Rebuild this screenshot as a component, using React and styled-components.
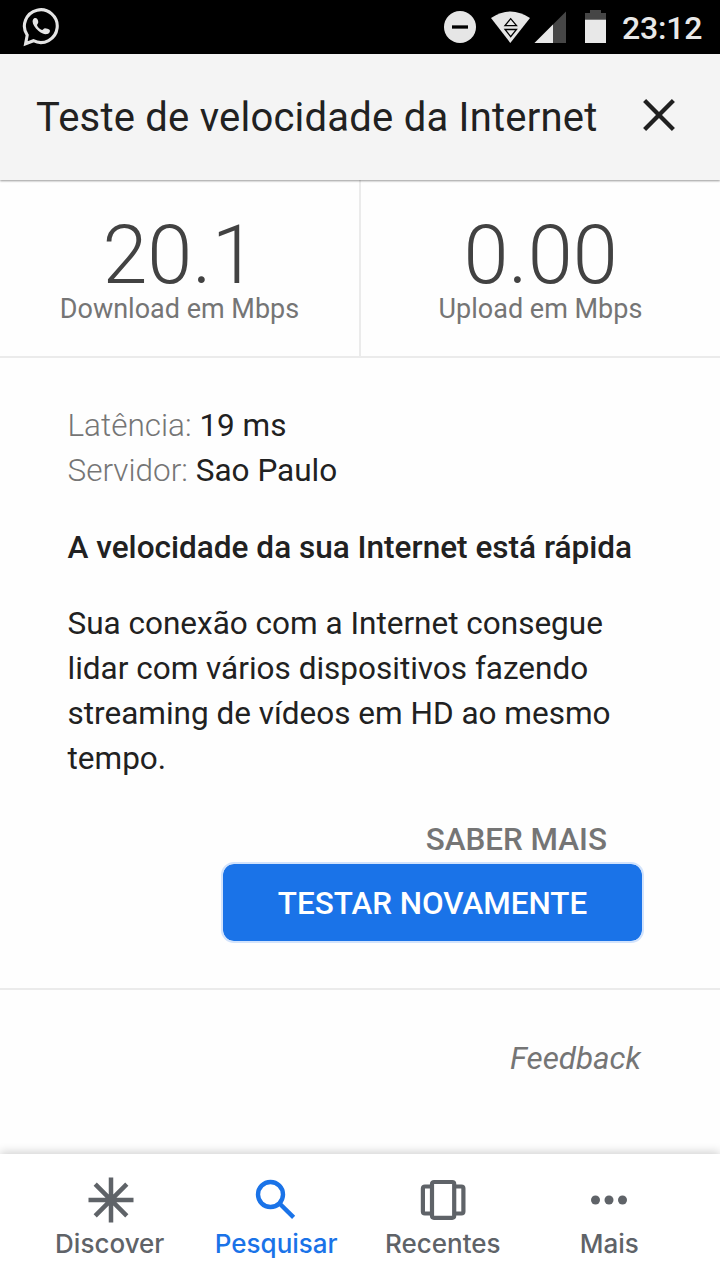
import styled, { createGlobalStyle } from "styled-components";

const metrics = [
  { value: "20.1", label: "Download em Mbps" },
  { value: "0.00", label: "Upload em Mbps" },
];

function WhatsAppIcon() {
  return (
    <svg width="38" height="40" viewBox="22 7 38 40">
      <path
        d="M25.6 43.7L27.2 35.2A16.4 16.4 0 1 1 33.4 40.7Z"
        fill="none"
        stroke="#e4e4e4"
        strokeWidth="3.1"
      />
      <path
        d="M33.2 19.3c.8-1.5 3-1.6 3.9-.5.9 1.2 1.3 2.8 1.1 4-.3 1-1.3 1.6-1.1 2.6.9 2.1 2.800 3.800 4.900 4.500 1.200-.1 1.800-1.600 3-1.700 1.500.1 3.500.7 4.800 1.700.6 1.500-.6 3.500-2.500 4.100-2.600.6-6-.7-9-3.300-3.300-3-5.700-6.500-5.700-9.300 0-.8.2-1.500.6-2.100z"
        fill="#e4e4e4"
      />
    </svg>
  );
}

function StatusIcons() {
  return (
    <svg width="166" height="38" viewBox="442 8 166 38">
      <circle cx="460" cy="27" r="16" fill="#e6e6e6" />
      <path d="M452 27h16" stroke="#000" strokeWidth="3.3" />
      <path d="M491 18Q510.5 5 530 18L510.3 43Z" fill="#e6e6e6" />
      <path
        d="M510.7 18.7L505 25.6H516.5ZM505 29.5H516.5L510.7 36.7Z"
        fill="none"
        stroke="#000"
        strokeWidth="1.3"
      />
      <path d="M534.5 43L566 11.5V43Z" fill="#464646" />
      <path d="M534.5 43L553 24.5V43Z" fill="#e8e8e8" />
      <path d="M585 13h5v-3h11v3h5v7h-21z" fill="#464646" />
      <path d="M585 19.7h21V43h-21z" fill="#e8e8e8" />
    </svg>
  );
}

function CloseIcon() {
  return (
    <svg width="34" height="34" viewBox="0 0 34 34">
      <path d="M2.6 2.6L31.4 31.4M31.4 2.6L2.6 31.4" stroke="#202020" strokeWidth="4.3" />
    </svg>
  );
}

function DiscoverIcon() {
  return (
    <svg width="48" height="48" viewBox="0 0 48 48">
      <path
        d="M25 1.5v45M2.5 24h45M9.2 8.2l31.6 31.6M40.8 8.2L9.2 39.8"
        stroke="#5f6368"
        strokeWidth="4.5"
      />
    </svg>
  );
}

function SearchIcon() {
  return (
    <svg width="48" height="48" viewBox="0 0 48 48">
      <g fill="none" stroke="#1a73e8" strokeWidth="4.4">
        <circle cx="18.5" cy="18.5" r="12.5" />
        <path d="M27.3 27.3L41.6 41.4" />
      </g>
    </svg>
  );
}

function RecentsIcon() {
  return (
    <svg width="48" height="48" viewBox="0 0 48 48">
      <g fill="none" stroke="#5f6368" strokeWidth="4.2">
        <rect x="13" y="6" width="22.2" height="35.8" rx="2" />
        <path d="M13 10.5H5.9Q3.9 10.5 3.9 12.5V35.5Q3.9 37.5 5.9 37.5H13" />
        <path d="M35.2 10.5H42.4Q44.4 10.5 44.4 12.5V35.5Q44.4 37.5 42.4 37.5H35.2" />
      </g>
    </svg>
  );
}

function MoreIcon() {
  return (
    <svg width="48" height="48" viewBox="0 0 48 48" fill="#5f6368">
      <circle cx="10.500" cy="24" r="4.5" />
      <circle cx="24" cy="24" r="4.5" />
      <circle cx="37.500" cy="24" r="4.5" />
    </svg>
  );
}

const tabs = [
  { label: "Discover", icon: <DiscoverIcon /> },
  { label: "Pesquisar", icon: <SearchIcon />, active: true },
  { label: "Recentes", icon: <RecentsIcon /> },
  { label: "Mais", icon: <MoreIcon /> },
];

function App() {
  return (
    <Screen>
      <GlobalStyle />
      <StatusBar>
        <WhatsAppIcon />
        <StatusRight>
          <StatusIcons />
          <Clock>23:12</Clock>
        </StatusRight>
      </StatusBar>
      <Header>
        <Title>Teste de velocidade da Internet</Title>
        <CloseButton aria-label="Fechar">
          <CloseIcon />
        </CloseButton>
      </Header>
      <Metrics>
        {metrics.map((metric) => (
          <Metric key={metric.label}>
            <MetricValue>{metric.value}</MetricValue>
            <MetricLabel>{metric.label}</MetricLabel>
          </Metric>
        ))}
      </Metrics>
      <Details>
        <Info>
          <InfoLabel>Latência:</InfoLabel> 19 ms
        </Info>
        <Info>
          <InfoLabel>Servidor:</InfoLabel> Sao Paulo
        </Info>
        <Verdict>A velocidade da sua Internet está rápida</Verdict>
        <Description>
          Sua conexão com a Internet consegue lidar com vários dispositivos
          fazendo streaming de vídeos em HD ao mesmo tempo.
        </Description>
        <Actions>
          <LearnMore>SABER MAIS</LearnMore>
          <RetryButton>TESTAR NOVAMENTE</RetryButton>
        </Actions>
      </Details>
      <Footer>
        <Feedback>Feedback</Feedback>
      </Footer>
      <NavBar>
        {tabs.map((tab) => (
          <Tab key={tab.label} $active={tab.active}>
            {tab.icon}
            <TabLabel>{tab.label}</TabLabel>
          </Tab>
        ))}
      </NavBar>
    </Screen>
  );
}

const GlobalStyle = createGlobalStyle`
  * {
    box-sizing: border-box;
  }

  body {
    margin: 0;
    background: #fff;
    font-family: Roboto, sans-serif;
  }

  h1, h2, p {
    margin: 0;
  }

  button {
    border: none;
    padding: 0;
    background: none;
    font-family: inherit;
  }

  svg {
    display: block;
  }
`;

const Screen = styled.div`
  display: flex;
  flex-direction: column;
  width: 720px;
  height: 1280px;
  overflow: hidden;
  background: #fefefe;
  color: #212121;
`;

const StatusBar = styled.div`
  display: flex;
  justify-content: space-between;
  align-items: center;
  flex-shrink: 0;
  height: 54px;
  padding: 0 18px 0 22px;
  background: #000;
`;

const StatusRight = styled.div`
  display: flex;
  align-items: center;
  gap: 14px;
`;

const Clock = styled.span`
  width: 80px;
  padding-top: 2px;
  font-size: 32px;
  font-weight: 500;
  line-height: 52px;
  letter-spacing: -0.2px;
  white-space: nowrap;
  color: #e8e8e8;
`;

const Header = styled.header`
  display: flex;
  justify-content: space-between;
  align-items: center;
  flex-shrink: 0;
  height: 126px;
  padding: 0 44px 0 36px;
  background: #f4f4f4;
  box-shadow: 0 1px 2px rgba(0, 0, 0, 0.4);
  z-index: 1;
`;

const Title = styled.h1`
  padding-top: 2px;
  font-size: 40px;
  font-weight: 400;
  line-height: 124px;
  white-space: nowrap;
  letter-spacing: 0.22px;
`;

const CloseButton = styled.button`
  margin-bottom: 4px;
`;

const Metrics = styled.section`
  display: grid;
  grid-template-columns: 361px 1fr;
  flex-shrink: 0;
  height: 178px;
  border-bottom: 2px solid #ebebeb;
`;

const Metric = styled.div`
  display: flex;
  flex-direction: column;
  align-items: center;
  padding-top: 39px;

  &:first-child {
    border-right: 2px solid #ebebeb;
  }
`;

const MetricValue = styled.div`
  height: 73px;
  font-size: 81px;
  font-weight: 300;
  line-height: 73px;
  color: #424242;
`;

const MetricLabel = styled.div`
  font-size: 27px;
  line-height: 34px;
  white-space: nowrap;
  color: #757575;
`;

const Details = styled.main`
  flex-shrink: 0;
  height: 632px;
  padding: 45px 78px 0 67.5px;
  border-bottom: 2px solid #ebebeb;
`;

const Info = styled.p`
  font-size: 31.5px;
  line-height: 45px;
`;

const InfoLabel = styled.span`
  font-weight: 300;
  color: #757575;
`;

const Verdict = styled.h2`
  margin-top: 32px;
  font-size: 31.55px;
  font-weight: 500;
  line-height: 45px;
  white-space: nowrap;
`;

const Description = styled.p`
  margin-top: 31px;
  font-size: 31.5px;
  line-height: 45px;
`;

const Actions = styled.div`
  display: flex;
  flex-direction: column;
  align-items: flex-end;
`;

const LearnMore = styled.button`
  margin: 36px 35px 0 0;
  font-size: 31.4px;
  font-weight: 500;
  line-height: 45px;
  white-space: nowrap;
  color: #757575;
`;

const RetryButton = styled.button`
  width: 423px;
  height: 81px;
  margin-right: -2px;
  padding-top: 1px;
  border: 2px solid #d2e3fc;
  border-radius: 13px;
  background: #1a73e8;
  background-clip: padding-box;
  font-size: 31.4px;
  font-weight: 500;
  white-space: nowrap;
  color: #fff;
`;

const Footer = styled.footer`
  display: flex;
  justify-content: flex-end;
  flex: 1;
  padding: 46px 79px 0 0;
`;

const Feedback = styled.span`
  font-size: 31.4px;
  font-style: italic;
  line-height: 46px;
  color: #757575;
`;

const NavBar = styled.nav`
  display: grid;
  grid-template-columns: repeat(4, 1fr);
  flex-shrink: 0;
  height: 126px;
  padding: 22px 27.5px 0 26.5px;
  background: #fff;
  box-shadow: 0 -2px 9px rgba(0, 0, 0, 0.18);
`;

const Tab = styled.button`
  display: flex;
  flex-direction: column;
  align-items: center;
  color: ${({ $active }) => ($active ? "#1a73e8" : "#5f6368")};
`;

const TabLabel = styled.span`
  margin-top: 3px;
  font-family: Inter, Roboto, sans-serif;
  font-size: 26px;
  font-weight: 500;
  line-height: 34px;
`;

export default App;
